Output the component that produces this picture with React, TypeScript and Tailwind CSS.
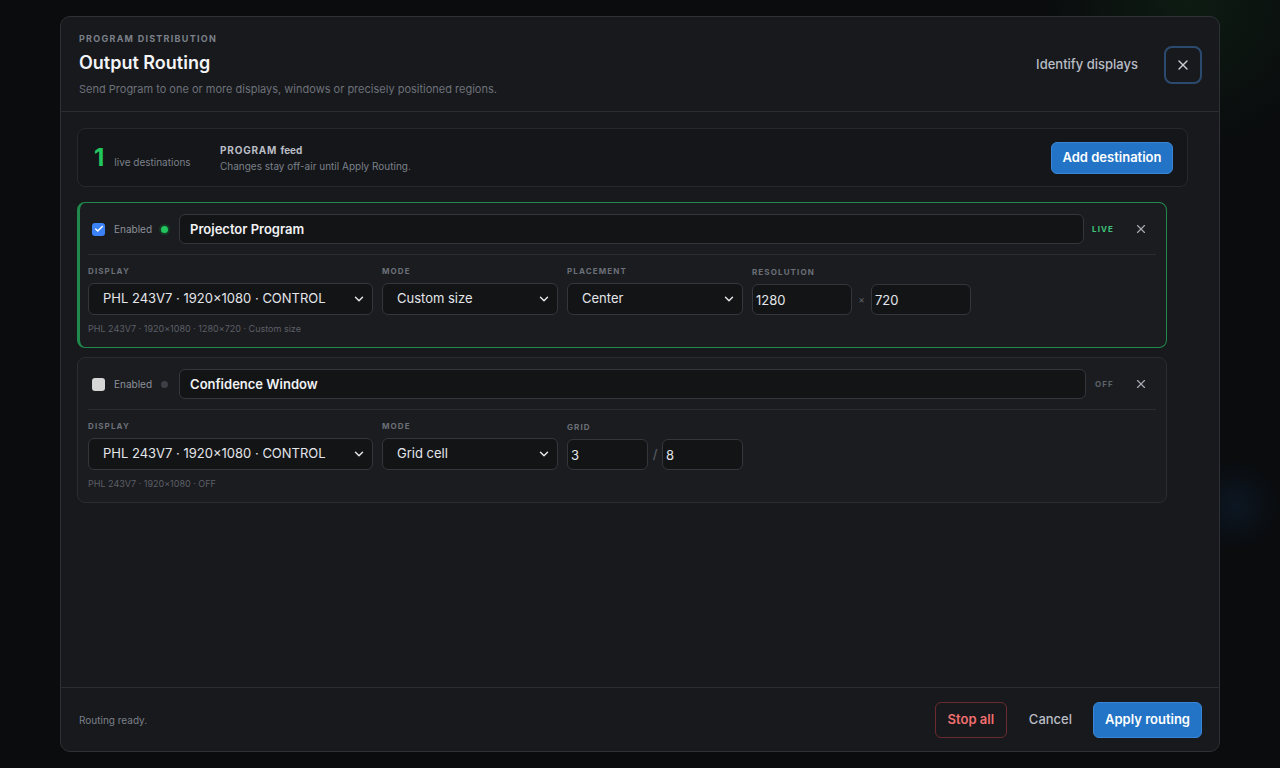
import { Check, ChevronDown, X } from 'lucide-react'

function Field({ label, className, children }: { label: string; className?: string; children: React.ReactNode }) {
    return (
        <div className={`flex flex-col gap-[7px] ${className ?? ''}`}>
            <span className="text-[8px] leading-[10px] font-bold tracking-[0.14em] text-[#6b7079]">{label}</span>
            {children}
        </div>
    )
}

function Select({ value, width }: { value: string; width: string }) {
    return (
        <div className={`relative ${width}`}>
            <select
                defaultValue={value}
                className="h-8 w-full appearance-none rounded-md border border-[#34363c] bg-[#131416] pl-[14px] pr-8 text-[13px] text-[#e4e6ea] outline-none"
            >
                <option>{value}</option>
            </select>
            <ChevronDown className="pointer-events-none absolute right-[7px] top-[9px] h-[14px] w-[14px] text-[#e4e6ea]" strokeWidth={2.5} />
        </div>
    )
}

function NumInput({ value, width }: { value: string; width: string }) {
    return (
        <input
            defaultValue={value}
            className={`h-[31px] ${width} rounded-md border border-[#34363c] bg-[#131416] px-[3px] text-[13px] text-[#e4e6ea] outline-none`}
        />
    )
}

function DestinationCard({
    live,
    name,
    helper,
    children,
}: {
    live: boolean
    name: string
    helper: string
    children: React.ReactNode
}) {
    return (
        <div
            className={`rounded-lg bg-[#1b1c1f] pt-[11px] pb-[13px] pr-[10px] ${
                live ? 'border border-l-[3px] border-[#1f8a4c] pl-[8px]' : 'border border-[#2a2c31] pl-[10px]'
            }`}
        >
            <div className="flex items-center">
                {live ? (
                    <span className="ml-[4px] flex h-[13px] w-[13px] items-center justify-center rounded-[3px] bg-[#3b82f6]">
                        <Check className="h-[10px] w-[10px] text-white" strokeWidth={3.5} />
                    </span>
                ) : (
                    <span className="ml-[4px] h-[13px] w-[13px] rounded-[3px] bg-[#d6d6d6]" />
                )}
                <span className="ml-[9px] text-[10px] text-[#8b9099]">Enabled</span>
                {live ? (
                    <span className="ml-[7px] h-[11px] w-[11px] rounded-full border-2 border-[#163a26] bg-[#22c55e]" />
                ) : (
                    <span className="ml-[7px] h-[11px] w-[11px] rounded-full border-2 border-[#1b1c1f] bg-[#3c3f45]" />
                )}
                <input
                    defaultValue={name}
                    className="ml-[9px] h-[30px] flex-1 rounded-md border border-[#34363c] bg-[#131416] px-[10px] text-[13px] font-semibold text-[#f1f2f4] outline-none"
                />
                {live ? (
                    <span className="ml-[8px] w-[26px] text-[8px] font-bold tracking-[0.14em] text-[#3ec47a]">LIVE</span>
                ) : (
                    <span className="ml-[9px] w-[23px] text-[8px] font-bold tracking-[0.14em] text-[#5e626a]">OFF</span>
                )}
                <button className="ml-[12px] mr-[4px] flex h-[22px] w-[22px] items-center justify-center text-[#a6abb3]">
                    <X className="h-[14px] w-[14px]" strokeWidth={2} />
                </button>
            </div>

            <div className="mt-[10px] border-t border-[#2a2c31]" />

            <div className="mt-[11px] flex items-end gap-[9px]">{children}</div>

            <p className="mt-[8px] text-[9px] leading-[11px] text-[#5b5f67]">{helper}</p>
        </div>
    )
}

export default function App() {
    return (
        <div className="h-[768px] w-full overflow-hidden bg-[#0a0c0e] bg-[radial-gradient(circle_at_1190px_0px,#0d1b12_0px,transparent_150px),radial-gradient(circle_at_1235px_505px,#0c1622_0px,transparent_45px)] pl-[60px] pt-4 font-['Inter',sans-serif]">
            <div className="flex h-[736px] w-[1160px] flex-col rounded-[10px] border border-[#2e3035] bg-[#18191c]">
                {/* header */}
                <div className="flex items-center border-b border-[#2a2c31] pl-[18px] pr-[17px] pt-[16px] pb-[14px]">
                    <div className="flex-1">
                        <p className="text-[9px] leading-[11px] font-bold tracking-[0.14em] text-[#7b808a]">PROGRAM DISTRIBUTION</p>
                        <h1 className="mt-[7px] text-[18px] leading-6 font-semibold text-[#f3f4f6]">Output Routing</h1>
                        <p className="mt-[6px] text-[11px] leading-4 text-[#6c717a]">
                            Send Program to one or more displays, windows or precisely positioned regions.
                        </p>
                    </div>
                    <button className="text-[13px] font-medium text-[#b9bdc5]">Identify displays</button>
                    <button className="ml-[26px] flex h-[38px] w-[38px] items-center justify-center rounded-lg border-2 border-[#2b4a6f] text-[#c9ccd2]">
                        <X className="h-[16px] w-[16px]" strokeWidth={2} />
                    </button>
                </div>

                {/* body */}
                <div className="flex-1 pl-4 pr-[31px] pt-4">
                    <div className="flex h-[59px] items-center rounded-lg border border-[#26282d] bg-[#151619] pl-4 pr-[14px]">
                        <div className="flex w-[126px] items-baseline">
                            <span className="text-[24px] leading-none font-bold text-[#22c55e]">1</span>
                            <span className="ml-[10px] text-[10px] text-[#7b808a]">live destinations</span>
                        </div>
                        <div className="flex-1">
                            <p className="text-[10px] leading-[14px] font-bold tracking-[0.08em] text-[#b9bdc5]">
                                PROGRAM <span className="tracking-normal">feed</span>
                            </p>
                            <p className="mt-[2px] text-[10px] leading-[14px] text-[#7b808a]">Changes stay off-air until Apply Routing.</p>
                        </div>
                        <button className="h-8 w-[122px] rounded-md border border-[#3a86d6] bg-[#2374c6] text-[13px] font-semibold text-white">
                            Add destination
                        </button>
                    </div>

                    <div className="mt-[15px] mr-[21px] flex flex-col gap-[9px]">
                        <DestinationCard live name="Projector Program" helper="PHL 243V7 · 1920×1080 · 1280×720 · Custom size">
                            <Field label="DISPLAY">
                                <Select value="PHL 243V7 · 1920×1080 · CONTROL" width="w-[285px]" />
                            </Field>
                            <Field label="MODE">
                                <Select value="Custom size" width="w-[176px]" />
                            </Field>
                            <Field label="PLACEMENT">
                                <Select value="Center" width="w-[176px]" />
                            </Field>
                            <Field label="RESOLUTION">
                                <div className="flex items-center">
                                    <NumInput value="1280" width="w-[100px]" />
                                    <span className="w-[19px] text-center text-[10px] text-[#5e626a]">×</span>
                                    <NumInput value="720" width="w-[100px]" />
                                </div>
                            </Field>
                        </DestinationCard>

                        <DestinationCard live={false} name="Confidence Window" helper="PHL 243V7 · 1920×1080 · OFF">
                            <Field label="DISPLAY">
                                <Select value="PHL 243V7 · 1920×1080 · CONTROL" width="w-[285px]" />
                            </Field>
                            <Field label="MODE">
                                <Select value="Grid cell" width="w-[176px]" />
                            </Field>
                            <Field label="GRID">
                                <div className="flex items-center">
                                    <NumInput value="3" width="w-[81px]" />
                                    <span className="w-[14px] text-center text-[13px] text-[#5e626a]">/</span>
                                    <NumInput value="8" width="w-[81px]" />
                                </div>
                            </Field>
                        </DestinationCard>
                    </div>
                </div>

                {/* footer */}
                <div className="flex h-[64px] items-center border-t border-[#2a2c31] pl-[18px] pr-[17px] pt-[1px]">
                    <span className="flex-1 text-[10px] text-[#7b808a]">Routing ready.</span>
                    <button className="h-9 w-[72px] rounded-md border border-[#6a2a2f] text-[13px] font-semibold text-[#f16f6f]">
                        Stop all
                    </button>
                    <button className="ml-[8px] h-9 px-[14px] text-[13px] font-medium text-[#b9bdc5]">Cancel</button>
                    <button className="ml-[7px] h-9 w-[109px] rounded-md border border-[#3a86d6] bg-[#2374c6] text-[13px] font-semibold text-white">
                        Apply routing
                    </button>
                </div>
            </div>
        </div>
    )
}
